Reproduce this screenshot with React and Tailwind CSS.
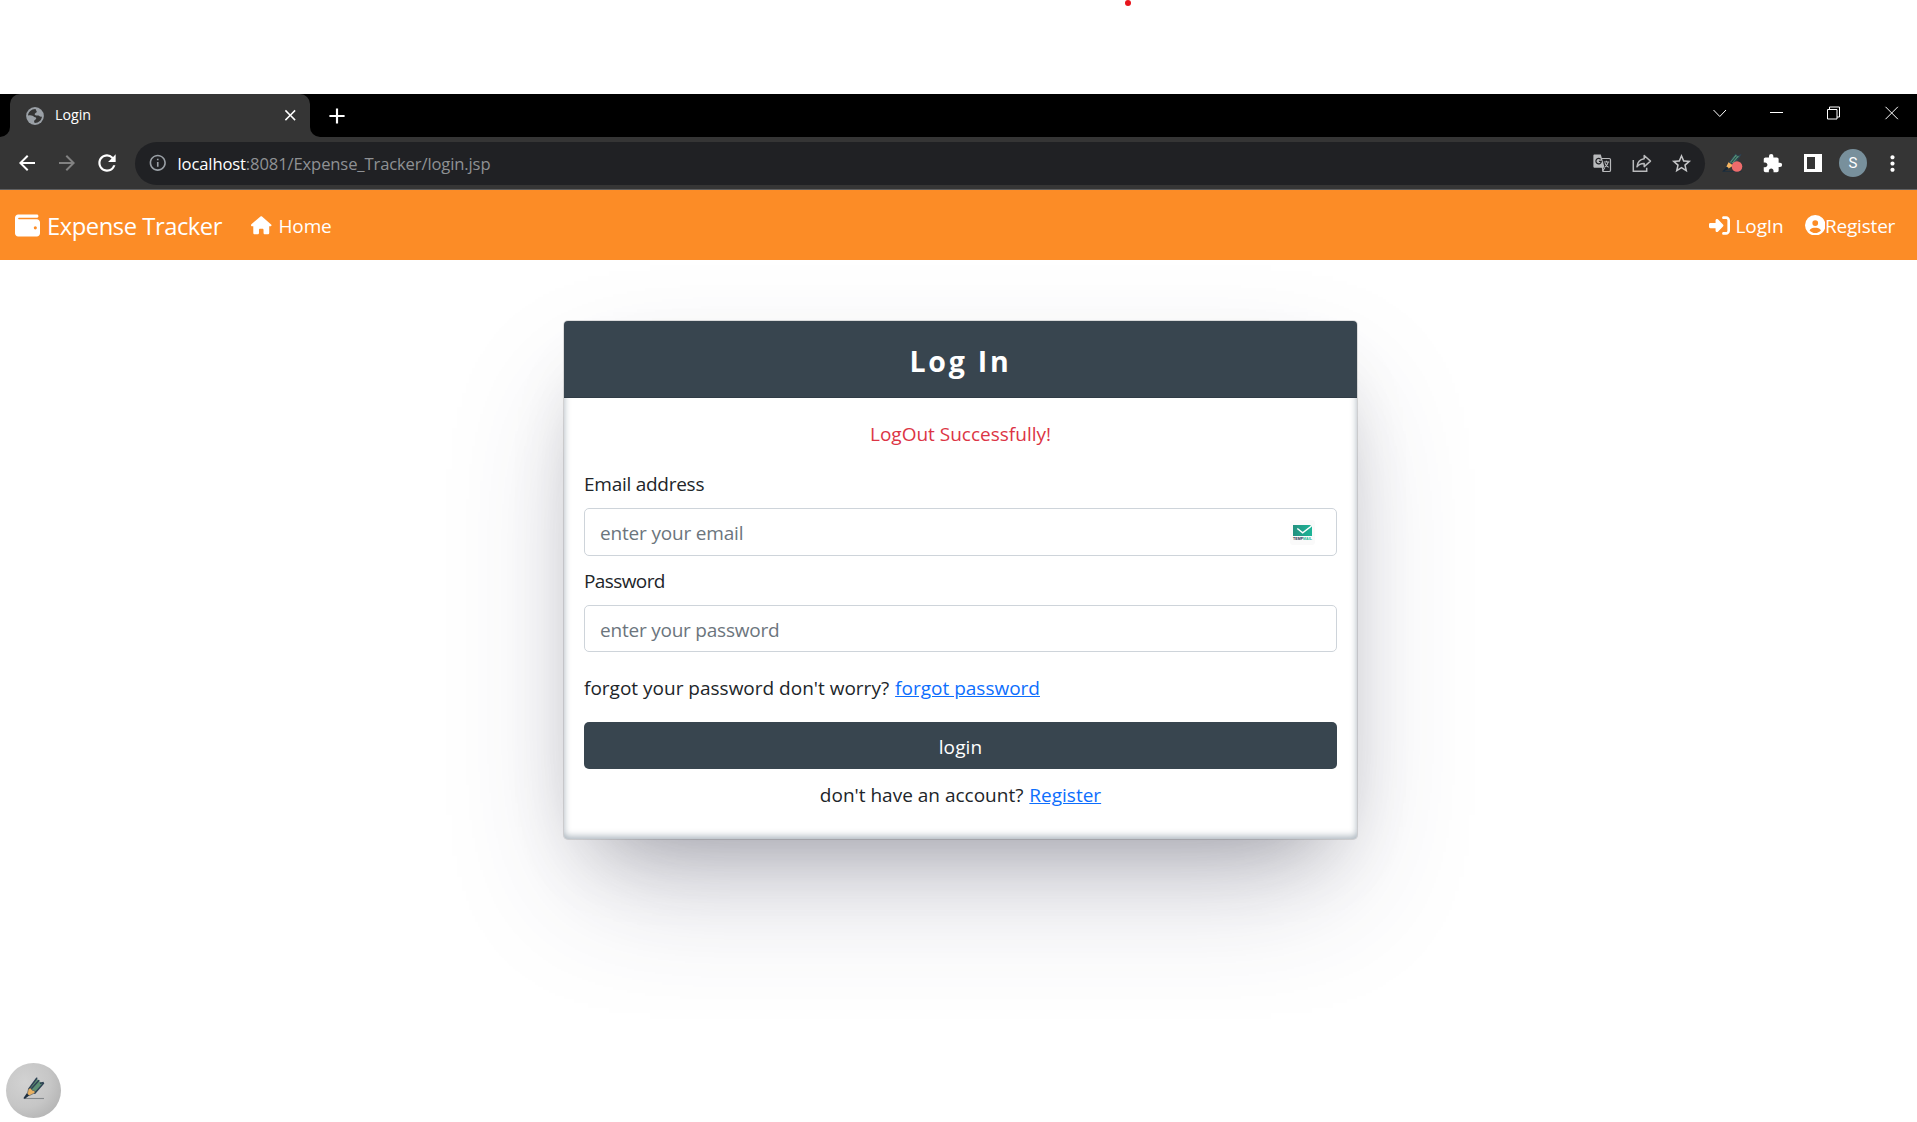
import React from "react";
import {
  MdAdd,
  MdArrowBack,
  MdArrowForward,
  MdClose,
  MdExtension,
  MdInfoOutline,
  MdMoreVert,
  MdRefresh,
  MdStarBorder,
} from "react-icons/md";
import {
  FaCircleUser,
  FaHouse,
  FaRightToBracket,
  FaWallet,
} from "react-icons/fa6";

function GlobeIcon() {
  return (
    <svg width="18" height="18" viewBox="0 0 18 18" className="shrink-0">
      <circle cx="9" cy="9" r="8.9" fill="#9aa0a6" />
      <path
        d="M9.6 2.1C5.6 1.9 2.2 5 2 8.6c1.6-.5 3.4-.4 4.6.2 1 .5 1.3 1.3 2.5 1.4 1.3.1 1.5 1.1.7 2-.8.8-1.8 1-1.7 2.300 0 .8.3 1.300.9 1.500 3.700 0 6.700-2.700 7-6.400-1 .5-2 .2-2.700-.5-.7-.7-1.800-.5-2.900-.5-1.400 0-2-1-1.500-2 .4-.9 1.500-.8 1.800-1.700.3-.9-.9-1.300-1.100-2.800z"
        fill="#353535"
      />
    </svg>
  );
}

function TranslateIcon() {
  return (
    <svg width="19" height="19" viewBox="0 0 19 19" className="shrink-0">
      <path d="M8 4.5h8.2c.8 0 1.3.5 1.3 1.3v10.4c0 .8-.5 1.3-1.3 1.3H10z" fill="none" stroke="#b9babc" strokeWidth="1.2" />
      <path d="M1.500.5h6.300l3.900 13.300H1.800C.9 13.800.4 13.300.4 12.400V1.600C.4.900.8.500 1.500.500z" fill="#b9babc" />
      <path d="M7.600 5.300a2.700 2.700 0 1 0 .7 2.100H5.900" fill="none" stroke="#202124" strokeWidth="1.2" />
      <path d="M10.800 8h5.400M13.400 6.800V8M15.200 8c-.4 2-1.600 3.900-3 5M12 9.200c.6 1.700 2 3 3.600 4.200M9.500 17.300l2.200-3.500" fill="none" stroke="#b9babc" strokeWidth="1.1" />
    </svg>
  );
}

function ShareIcon() {
  return (
    <svg width="20" height="19" viewBox="0 0 20 19" className="shrink-0" fill="none" stroke="#b9babc" strokeWidth="1.5">
      <path d="M1.300 6v11.300h13.400v-3.600" />
      <path d="M12.200 1.500l6.300 5.600-6.300 5.500V9.500c-3.300-.1-5.500.8-7.200 3.300.4-4.400 2.800-7.500 7.200-8.100z" strokeLinejoin="round" />
    </svg>
  );
}

function PencilExtensionIcon() {
  return (
    <svg width="21" height="20" viewBox="0 0 21 20" className="shrink-0">
      <path d="M.5 18.500h19" stroke="#22303c" strokeWidth="1" />
      <path d="M7 9.500L13.500 1l2.500 2 3-1.500-6.500 10z" fill="#4f8a70" stroke="#2c3e50" strokeWidth="1" />
      <path d="M9.500 9.500l5-6M11.500 10.500l5-6" stroke="#263648" strokeWidth="1" />
      <path d="M6.500 9.300l4.800 3.200-5 3.200-2.200-1.500z" fill="#f5b461" />
      <path d="M4.600 13.500l2.400 1.800-4.800 3H.6z" fill="#17293a" />
      <circle cx="15" cy="13.5" r="5.300" fill="#ee6c6c" />
    </svg>
  );
}

function PencilIcon() {
  return (
    <svg width="22" height="23" viewBox="0 0 22 23">
      <path d="M1 21.500h20" stroke="#85898c" strokeWidth="1.1" />
      <path d="M6.200 11.200L13.700 1.500l2 2.500 4.300 2.200-7.800 9.800z" fill="#5c8f73" />
      <path d="M5.800 12l7.900-10.800M8.800 11.200l7-7.600M11.800 16.200l8.600-9.800-.4-.8-2.400.6" fill="none" stroke="#2e4154" strokeWidth="1.5" strokeLinecap="round" />
      <path d="M5.500 11.800l2-.8 1.600 2.200 2.600.6.3 2-6 3-1.800-1.600z" fill="#e8b061" stroke="#2e4154" strokeWidth=".5" />
      <path d="M3.800 16.300l2.400 2.200L2 21.700l-1.700-.4z" fill="#1e2f40" />
    </svg>
  );
}

function TempMailIcon() {
  return (
    <div className="flex h-[25px] w-[25px] flex-col items-center rounded-[3px] bg-[#fafafa] pt-[5px]">
      <svg width="19" height="11" viewBox="0 0 19 11">
        <defs>
          <linearGradient id="mail" x1="0" x2="1">
            <stop offset="0" stopColor="#23907f" />
            <stop offset="1" stopColor="#1cb597" />
          </linearGradient>
        </defs>
        <path d="M0 0h17l2 1.500V11H0z" fill="url(#mail)" />
        <path d="M4.300 3.500L9.700 7.800 18.500 1" fill="none" stroke="#fff" strokeWidth="1.5" />
      </svg>
      <div className="mt-[1px] flex font-['Liberation_Sans'] text-[3.6px] leading-[4px] font-black">
        <span className="text-[#1d2b4a]">TEMP</span>
        <span className="text-[#1fb597]">MAIL</span>
      </div>
    </div>
  );
}

function TabStrip() {
  return (
    <div className="flex h-[43px] bg-black">
      <div className="flex w-[10px] bg-[#353535]">
        <div className="w-full rounded-br-[10px] bg-black" />
      </div>
      <div className="w-[300px] bg-black">
        <div className="flex h-full items-center rounded-t-[10px] bg-[#353535] pr-[11px] pl-4">
          <GlobeIcon />
          <span className="ml-[11px] flex-1 pb-[2px] text-[14.25px] leading-5 text-white">Login</span>
          <MdClose size={18.5} className="text-white" />
        </div>
      </div>
      <div className="w-[10px] bg-[#353535]">
        <div className="h-full rounded-bl-[10px] bg-black" />
      </div>
      <div className="flex flex-1 items-center pl-1">
        <MdAdd size={26} className="text-white" />
      </div>
      <svg width="186" height="14" viewBox="0 0 186 14" className="mt-[12px] mr-[18px]" fill="none" stroke="#fff" strokeWidth="1">
        <path d="M0.500 4l6.300 6.500L13 4" />
        <path d="M57 6.500h13" />
        <path d="M114.500 3.500h9.500v9.500h-9.500zM116.500 3.500v-2.500h10v10h-2.500" />
        <path d="M172.500.8l12.400 12.400M184.900.8L172.500 13.200" />
      </svg>
    </div>
  );
}

function Toolbar() {
  return (
    <div className="flex h-[53px] items-center border-b border-[#5f6062] bg-[#353535] pr-[12px] pl-[15px]">
      <MdArrowBack size={24} className="text-white" />
      <MdArrowForward size={24} className="ml-4 text-[#828282]" />
      <MdRefresh size={26} className="ml-[15px] text-white" />
      <div className="ml-[15px] flex h-[43px] w-[1570px] items-center rounded-full bg-[#202124] pr-[12px] pl-[13px]">
        <MdInfoOutline size={19.5} className="text-[#9aa0a6]" />
        <div className="ml-[10px] flex-1 pt-[2px] text-[16.6px] tracking-[-0.13px] text-[#8f9194]">
          <span className="text-white">localhost</span>:8081/Expense_Tracker/login.jsp
        </div>
        <TranslateIcon />
        <div className="w-5" />
        <ShareIcon />
        <MdStarBorder size={23} className="ml-[18px] text-[#c4c5c7]" />
      </div>
      <div className="ml-[17px] flex flex-1 items-center">
        <PencilExtensionIcon />
        <MdExtension size={21} className="ml-[19px] text-white" />
        <div className="ml-[21px] h-[18px] w-[18px] border-[3px] border-r-[7px] border-white" />
        <div className="ml-[17px] flex h-7 w-7 items-center justify-center rounded-full bg-[#78909c] font-[Roboto] text-[15px] text-white">S</div>
        <MdMoreVert size={25} className="ml-[13px] text-white" />
      </div>
    </div>
  );
}

function NavBar() {
  return (
    <nav className="flex h-[70px] items-center bg-[#fc8c26] pr-[21px] pl-[15px] text-[19px] text-white">
      <FaWallet size={25} />
      <span className="ml-[7px] w-[175px] pt-[3px] text-[23.75px] tracking-[-0.45px] whitespace-nowrap">Expense Tracker</span>
      <FaHouse size={20.5} className="ml-[29px]" />
      <span className="ml-[7px] flex-1 pt-[2px] tracking-[-0.15px]">Home</span>
      <FaRightToBracket size={21} />
      <span className="ml-[6px] w-[49px] pt-[2px] tracking-[-0.1px]">LogIn</span>
      <FaCircleUser size={20.5} className="ml-[20px]" />
      <span className="w-[71px] pt-[2px] tracking-[-0.2px]">Register</span>
    </nav>
  );
}

function LoginCard() {
  return (
    <div className="mx-auto mt-[60px] h-[520px] w-[795px] translate-x-[2px] rounded-[5px] border border-black/12 bg-white bg-clip-padding text-[19px] leading-[30px] text-[#212529] shadow-[0_62px_125px_-25px_rgba(50,50,93,0.25),0_37px_75px_-37px_rgba(0,0,0,0.3),inset_0_-2.5px_7.5px_0_rgba(10,37,64,0.35)]">
      <div className="flex h-[77px] items-center justify-center rounded-t-[4px] border-b border-[#303c46] bg-[#38454f] pt-[3px] text-[28.5px] font-bold tracking-[2.8px] text-white">
        Log In
      </div>
      <form className="flex flex-col px-5 pt-[21px]" onSubmit={(e) => e.preventDefault()}>
        <p className="text-center text-[#dc3545]">LogOut Successfully!</p>
        <label className="mt-5 tracking-[-0.26px]">Email address</label>
        <div className="mt-[9px] flex h-[48px] items-center rounded-[5px] border border-[#ced4da] bg-white pr-[21px] pl-[15px]">
          <input type="email" placeholder="enter your email" className="h-full flex-1 pt-[2px] tracking-[-0.18px] outline-none placeholder:text-[#6c757d]" />
          <TempMailIcon />
        </div>
        <label className="mt-[10px] tracking-[-0.6px]">Password</label>
        <div className="mt-[9px] flex h-[47px] rounded-[5px] border border-[#ced4da] bg-white px-[15px]">
          <input type="password" placeholder="enter your password" className="h-full flex-1 pt-[2px] tracking-[-0.22px] outline-none placeholder:text-[#6c757d]" />
        </div>
        <p className="mt-[21px]">
          forgot your password don't worry?
          <a href="#forgot" className="ml-[6px] text-[#0d6efd] underline">forgot password</a>
        </p>
        <button className="mt-[19px] h-[47px] rounded-[5px] bg-[#38454f] pt-[3px] tracking-[0.15px] text-white">login</button>
        <p className="mt-[11px] text-center">
          don't have an account?
          <a href="#register" className="ml-[6px] text-[#0d6efd] underline">Register</a>
        </p>
      </form>
    </div>
  );
}

export default function App() {
  return (
    <div className="relative h-[1122px] w-[1917px] overflow-hidden bg-white pt-[94px] font-['Open_Sans',sans-serif]">
      <div className="absolute top-0 left-[1125px] h-[6px] w-[6px] rounded-full bg-[#e8141c]" />
      <TabStrip />
      <Toolbar />
      <NavBar />
      <LoginCard />
      <button
        aria-label="Annotate"
        className="absolute bottom-[4px] left-[6px] flex h-[55px] w-[55px] items-center justify-center rounded-full bg-[radial-gradient(circle_at_35%_35%,#d2d2d2_0%,#c6c6c6_50%,#a9a9a9_100%)] pb-[5px]"
      >
        <PencilIcon />
      </button>
    </div>
  );
}
